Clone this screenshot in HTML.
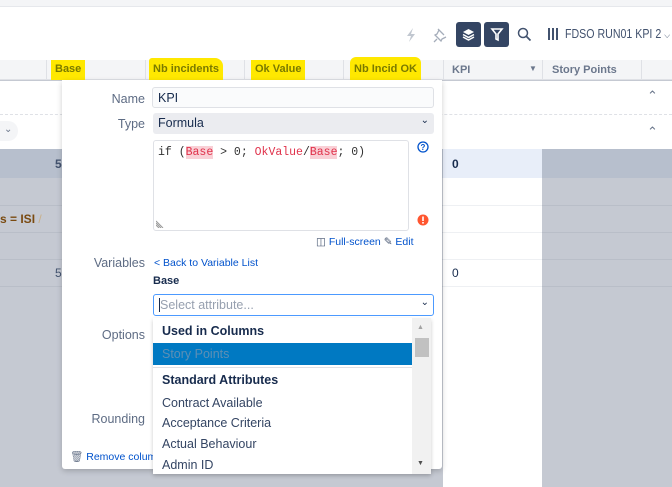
<!DOCTYPE html>
<html><head><meta charset="utf-8"><style>
*{box-sizing:border-box;margin:0;padding:0}
body{width:672px;height:487px;overflow:hidden;position:relative;background:#c5c9d2;font-family:"Liberation Sans",sans-serif;font-size:12px;color:#172b4d}
.a{position:absolute}
.hl{background:#ffe800;color:#7a7a00;font-weight:bold;font-size:11px;padding:3px 4px 4px}
.lbl{position:absolute;width:83px;text-align:right;color:#5e6c84;font-size:12.5px}
</style></head><body>
<div class="a" style="left:0;top:0;width:672px;height:7px;background:#f4f5f7;border-bottom:1px solid #e6e8ec"></div>
<div class="a" style="left:0;top:7px;width:672px;height:53px;background:#fff"></div>
<!-- toolbar -->
<svg class="a" style="left:404px;top:27px" width="14" height="16" viewBox="0 0 14 16"><path d="M9 1 L3 9 H7 L5 15 L11 7 H7 Z" fill="#c1c7d0"/></svg>
<svg class="a" style="left:433px;top:27px" width="14" height="16" viewBox="0 0 14 16"><path d="M5 2 L11 8 M6 3 L4 7 L2 8 L8 14 L9 12 L13 10 M4 12 L1 15" stroke="#a5adba" stroke-width="1.3" fill="none"/></svg>
<div class="a" style="left:456px;top:22px;width:25px;height:25px;background:#344563;border-radius:3px"></div>
<svg class="a" style="left:461px;top:27px" width="15" height="15" viewBox="0 0 15 15"><path d="M7.5 2 L13 5 L7.5 8 L2 5Z" fill="#fff"/><path d="M2 7.5 L7.5 10.5 L13 7.5 M2 10 L7.5 13 L13 10" stroke="#fff" stroke-width="1.5" fill="none"/></svg>
<div class="a" style="left:484px;top:22px;width:25px;height:25px;background:#344563;border-radius:3px"></div>
<svg class="a" style="left:490px;top:27px" width="14" height="15" viewBox="0 0 14 15"><path d="M2 2 H12 L8 7 V13 L6 12 V7 Z" stroke="#fff" stroke-width="1.6" fill="none"/></svg>
<svg class="a" style="left:517px;top:27px" width="15" height="15" viewBox="0 0 15 15"><circle cx="6" cy="6" r="4.5" stroke="#42526e" stroke-width="1.5" fill="none"/><path d="M9.5 9.5 L13.5 13.5" stroke="#42526e" stroke-width="1.7"/></svg>
<div class="a" style="left:548px;top:28px;width:2px;height:12px;background:#42526e"></div>
<div class="a" style="left:552px;top:28px;width:2px;height:12px;background:#42526e"></div>
<div class="a" style="left:556px;top:28px;width:2px;height:12px;background:#42526e"></div>
<div class="a" style="left:565px;top:27px;font-size:12.5px;color:#42526e;white-space:nowrap;transform:scaleX(0.85);transform-origin:0 0">FDSO RUN01 KPI 2 <span style="font-size:9px">&#9013;</span></div>
<!-- column header -->
<div class="a" style="left:0;top:60px;width:672px;height:20px;background:#f4f5f7;border-bottom:1px solid #dfe1e6"></div>
<div class="a" style="left:46px;top:60px;width:1px;height:20px;background:#dfe1e6"></div>
<div class="a" style="left:145px;top:60px;width:1px;height:20px;background:#dfe1e6"></div>
<div class="a" style="left:244px;top:60px;width:1px;height:20px;background:#dfe1e6"></div>
<div class="a" style="left:343px;top:60px;width:1px;height:20px;background:#dfe1e6"></div>
<div class="a" style="left:443px;top:60px;width:1px;height:20px;background:#dfe1e6"></div>
<div class="a" style="left:542px;top:60px;width:1px;height:20px;background:#dfe1e6"></div>
<div class="a" style="left:641px;top:60px;width:1px;height:20px;background:#dfe1e6"></div>
<div class="a hl" style="left:51px;top:60px;height:20px">Base</div>
<div class="a hl" style="left:149px;top:58px;height:22px;padding-top:5px;border-radius:3px 8px 0 0">Nb incidents</div>
<div class="a hl" style="left:251px;top:60px;height:20px">Ok Value</div>
<div class="a hl" style="left:350px;top:57px;height:23px;padding-top:6px;border-radius:6px 6px 0 0">Nb Incid OK</div>
<div class="a" style="left:452px;top:64px;font-size:11px;font-weight:bold;color:#6b778c">KPI</div>
<div class="a" style="left:529px;top:64px;font-size:8px;color:#6b778c">&#9660;</div>
<div class="a" style="left:552px;top:64px;font-size:11px;font-weight:bold;color:#6b778c">Story Points</div>
<!-- body rows -->
<div class="a" style="left:0;top:81px;width:672px;height:68px;background:#fff"></div>
<div class="a" style="left:0;top:114px;width:672px;border-top:1px dashed #dfe1e6"></div>
<div class="a" style="left:647px;top:88px;color:#6b778c;font-size:13px">&#8963;</div>
<div class="a" style="left:647px;top:124px;color:#6b778c;font-size:13px">&#8963;</div>
<div class="a" style="left:0;top:121px;width:18px;height:20px;background:#f4f5f7;border-radius:0 10px 10px 0;color:#6b778c;font-size:10px;padding:3px 0 0 4px">&#8964;</div>
<div class="a" style="left:0;top:149px;width:672px;height:29px;background:#b7bfcd"></div>
<div class="a" style="left:443px;top:149px;width:99px;height:29px;background:#e8eef9"></div>
<div class="a" style="left:443px;top:178px;width:99px;height:309px;background:#fff"></div>
<div class="a" style="left:0;top:205px;width:672px;height:1px;background:#b9bec8"></div>
<div class="a" style="left:0;top:232px;width:672px;height:1px;background:#b9bec8"></div>
<div class="a" style="left:0;top:259px;width:672px;height:1px;background:#b9bec8"></div>
<div class="a" style="left:0;top:286px;width:672px;height:1px;background:#b9bec8"></div>
<div class="a" style="left:443px;top:205px;width:99px;height:1px;background:#eef0f3"></div>
<div class="a" style="left:443px;top:232px;width:99px;height:1px;background:#eef0f3"></div>
<div class="a" style="left:443px;top:259px;width:99px;height:1px;background:#eef0f3"></div>
<div class="a" style="left:443px;top:286px;width:99px;height:1px;background:#eef0f3"></div>
<div class="a" style="left:452px;top:157px;font-weight:bold">0</div>
<div class="a" style="left:452px;top:266px">0</div>
<div class="a" style="left:55px;top:157px;font-weight:bold;color:#42526e">53</div>
<div class="a" style="left:55px;top:266px;color:#42526e">53</div>
<div class="a" style="left:0;top:212px;font-weight:bold;color:#7a4a10">s = ISI <span style="color:#c9b08a;font-weight:normal">/</span></div>
<!-- popup -->
<div class="a" style="left:62px;top:80px;width:380px;height:389px;background:#fff;box-shadow:0 2px 6px rgba(0,0,0,.2);border-radius:0 0 3px 3px">
 <div class="lbl" style="left:0;top:12px">Name</div>
 <div class="a" style="left:90px;top:7px;width:282px;height:21px;border:1px solid #dfe1e6;border-radius:3px;background:#fafbfc;padding:3px 5px;font-size:12.5px">KPI</div>
 <div class="lbl" style="left:0;top:37px">Type</div>
 <div class="a" style="left:91px;top:33px;width:281px;height:21px;background:#ebecf0;border-radius:3px;padding:3px 5px;font-size:12.5px">Formula<span style="position:absolute;right:5px;top:2px;font-size:10px">&#8964;</span></div>
 <div class="a" style="left:91px;top:60px;width:256px;height:91px;border:1px solid #dfe1e6;border-radius:3px;font-family:'Liberation Mono',monospace;font-size:11.5px;padding:5px 4px;color:#333">if (<span style="background:#f9d0d6;color:#e0324b">Base</span> &gt; 0; <span style="color:#e0324b">OkValue</span>/<span style="background:#f9d0d6;color:#e0324b">Base</span>; 0)
  <svg style="position:absolute;left:2px;bottom:2px" width="8" height="8"><path d="M0 3L5 8M0 5L3 8M0 1L7 8" stroke="#999" stroke-width="1"/></svg></div>
 <svg class="a" style="left:355px;top:61px" width="12" height="12"><circle cx="6" cy="6" r="5" stroke="#0052cc" stroke-width="1.3" fill="none"/><text x="6" y="9" font-size="8" font-weight="bold" text-anchor="middle" fill="#0052cc" font-family="Liberation Sans">?</text></svg>
 <svg class="a" style="left:355px;top:134px" width="12" height="12"><circle cx="6" cy="6" r="5.5" fill="#ff5630"/><rect x="5.2" y="2.5" width="1.6" height="4.5" fill="#fff"/><rect x="5.2" y="8" width="1.6" height="1.6" fill="#fff"/></svg>
 <div class="a" style="left:254px;top:156px;font-size:10.5px;color:#0052cc;white-space:nowrap"><span style="color:#42526e">&#9707;</span> Full-screen <span style="color:#42526e">&#9998;</span> Edit</div>
 <div class="lbl" style="left:0;top:176px">Variables</div>
 <div class="a" style="left:92px;top:177px;font-size:10.5px;color:#0052cc">&lt; Back to Variable List</div>
 <div class="a" style="left:91px;top:195px;font-size:11px;font-weight:bold">Base</div>
 <div class="a" style="left:91px;top:214px;width:281px;height:22px;border:1.5px solid #4c9aff;border-radius:3px;padding:3px 5px;color:#97a0af;font-size:12.5px"><span style="border-left:1px solid #172b4d"></span>Select attribute...<span style="position:absolute;right:4px;top:2px;color:#172b4d;font-size:10px">&#8964;</span></div>
 <div class="lbl" style="left:0;top:248px">Options</div>
 <div class="lbl" style="left:0;top:332px">Rounding</div>
 <div class="a" style="left:8px;top:370px;font-size:10.5px;color:#0052cc;white-space:nowrap"><span style="color:#6b778c">&#128465;</span> Remove column</div>
</div>
<!-- dropdown -->
<div class="a" style="left:153px;top:318px;width:278px;height:156px;background:#fff;box-shadow:0 2px 4px rgba(0,0,0,.2);overflow:hidden">
 <div class="a" style="left:259px;top:0;width:19px;height:156px;background:#f1f1f1"></div>
 <div class="a" style="left:262px;top:20px;width:14px;height:19px;background:#c1c1c1"></div>
 <div class="a" style="left:264px;top:6px;font-size:7px;color:#a3a3a3">&#9650;</div>
 <div class="a" style="left:264px;top:142px;font-size:7px;color:#505050">&#9660;</div>
 <div class="a" style="left:9px;top:6px;font-weight:bold;font-size:12.5px">Used in Columns</div>
 <div class="a" style="left:0;top:25px;width:259px;height:22px;background:#0079c2;color:#5d8fb5;padding:4px 9px;font-size:12.5px">Story Points</div>
 <div class="a" style="left:0;top:49px;width:259px;height:1px;background:#dfe1e6"></div>
 <div class="a" style="left:9px;top:55px;font-weight:bold;font-size:12.5px">Standard Attributes</div>
 <div class="a" style="left:9px;top:78px;font-size:12.5px;color:#344563">Contract Available</div>
 <div class="a" style="left:9px;top:98px;font-size:12.5px;color:#344563">Acceptance Criteria</div>
 <div class="a" style="left:9px;top:119px;font-size:12.5px;color:#344563">Actual Behaviour</div>
 <div class="a" style="left:9px;top:140px;font-size:12.5px;color:#344563">Admin ID</div>
</div>
</body></html>
